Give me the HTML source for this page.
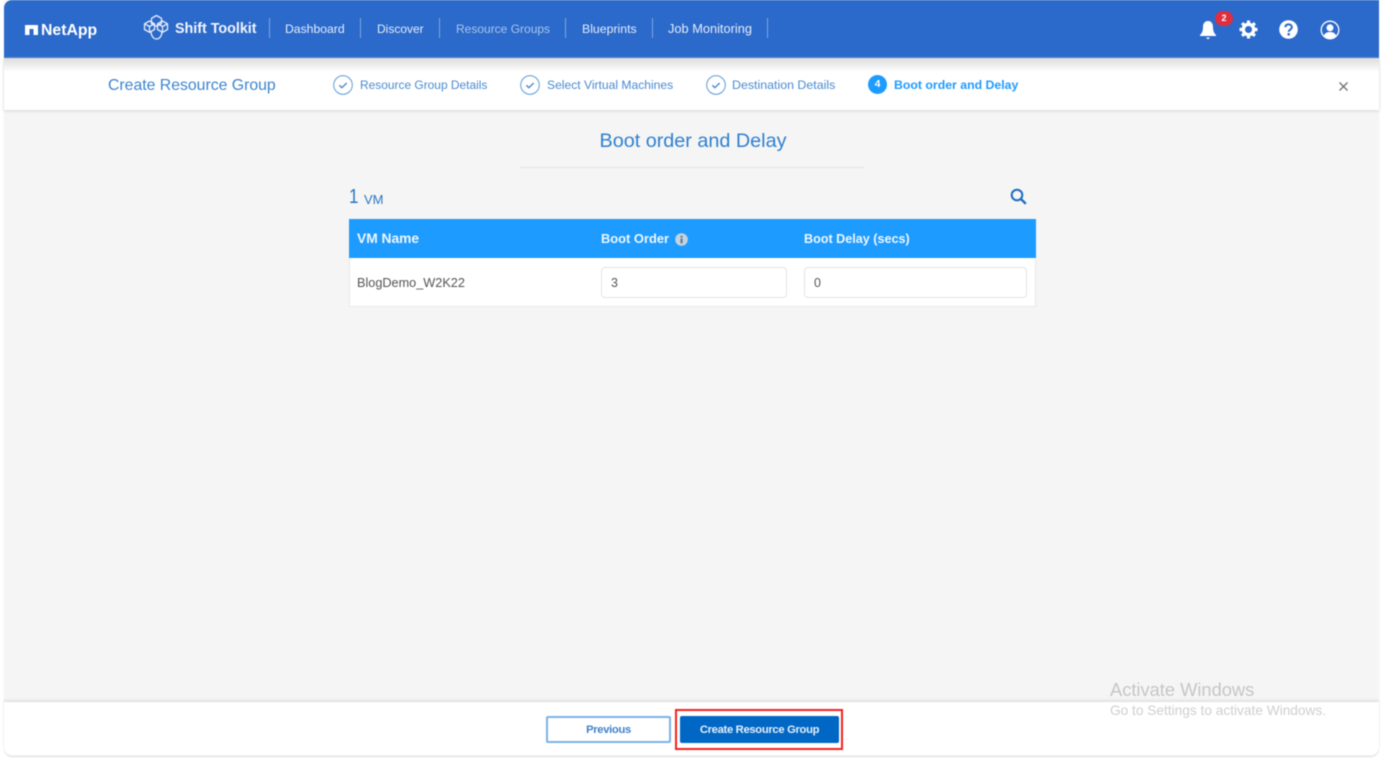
<!DOCTYPE html>
<html lang="en">
<head>
<meta charset="utf-8">
<title>Create Resource Group</title>
<style>
*{box-sizing:border-box;margin:0;padding:0}
html,body{width:1384px;height:760px;overflow:hidden;background:#fff;font-family:"Liberation Sans",sans-serif}
#wrap{position:absolute;left:0;top:0;width:1384px;height:760px;filter:blur(.45px)}
#app{position:absolute;left:4px;top:0;width:1375px;height:756px;background:#f5f5f5;border-radius:0 0 8px 8px;overflow:hidden;box-shadow:0 1px 1px #ddd}
.t{position:absolute;white-space:nowrap;line-height:1}
#hdr{position:absolute;left:4px;top:0;width:1375px;height:58px;background:#2b69ca;border-radius:8px 0 0 0}
#sub{position:absolute;left:4px;top:58px;width:1375px;height:52px;background:#fff;box-shadow:0 1px 3px #d5d5d5}
#shade{position:absolute;left:4px;top:58px;width:1375px;height:14px;background:linear-gradient(#dcdcdc,#fff)}
.sep{position:absolute;top:18px;width:1px;height:20px;background:#7ea5e0}
.nav{color:#e4edfa;top:23px}
.step{color:#4a8ad0;top:79px}
.th{font-weight:bold;color:#eef7ff;top:233px}
.inp{position:absolute;top:267px;height:31px;background:#fff;border:1px solid #e3e3e3;border-radius:4px;font-size:12.5px;color:#555;padding:8px 0 0 9px}
svg{position:absolute;overflow:visible}
</style>
</head>
<body>
<div id="wrap">
<div id="app"></div>
<div id="hdr"></div>
<div id="sub"></div>
<div id="shade"></div>

<!-- NetApp logo -->
<svg style="left:25px;top:25px" width="13" height="10" viewBox="0 0 13 10"><path d="M0 0H13V10H8.500V4H4.500V10H0Z" fill="#fff"/></svg>
<div class="t" style="left:41px;top:23px;font-size:15.800px;font-weight:bold;color:#fff">NetApp</div>

<!-- Shift Toolkit logo -->
<svg style="left:143px;top:14px" width="26" height="27" viewBox="0 0 26 27" fill="none" stroke="#e8effa" stroke-width="1.300" stroke-linejoin="round">
<path d="M13.500 1.500 18.500 4.300V9.500L13.500 12.300 8.500 9.500V4.300Z"/>
<path d="M6.500 7 11.500 9.800V15.500L6.500 18.300 1.500 15.500V9.800Z"/>
<path d="M19.500 7 24.500 9.800V15.500L19.500 18.300 14.500 15.500V9.800Z"/>
<path d="M8 17.500C8 21 10 25 13.500 25S19 21 19 18"/>
<path d="M1.500 9.800 6.500 12.500 11.500 9.800M6.500 12.500V18.300M14.500 9.800 19.500 12.500 24.500 9.800M19.500 12.500V18.300"/>
</svg>
<div class="t" style="left:175px;top:22px;font-size:14.300px;font-weight:bold;color:#f2f6fd">Shift Toolkit</div>

<div class="sep" style="left:269px"></div>
<div class="t nav" style="left:285px;font-size:12.200px">Dashboard</div>
<div class="sep" style="left:360px"></div>
<div class="t nav" style="left:377px;font-size:12px">Discover</div>
<div class="sep" style="left:439px"></div>
<div class="t nav" style="left:456px;color:#a9c5ee;font-size:12px">Resource Groups</div>
<div class="sep" style="left:565px"></div>
<div class="t nav" style="left:582px;font-size:12.300px">Blueprints</div>
<div class="sep" style="left:652px"></div>
<div class="t nav" style="left:668px;font-size:12.800px">Job Monitoring</div>
<div class="sep" style="left:767px"></div>

<!-- Header icons -->
<svg style="left:1199px;top:20px" width="18" height="20" viewBox="0 0 18 20"><path d="M9 1C5.500 1 4 4 4 7c0 4-1 6-3 8v1h16v-1c-2-2-3-4-3-8 0-3-1.500-6-5-6Z" fill="#fff"/><path d="M7 17.500h4L9 19.500Z" fill="#fff"/></svg>
<div class="t" style="left:1215px;top:11px;width:18px;height:15px;border-radius:8px;background:#df2e3f;color:#fff;font-size:9px;font-weight:bold;text-align:center;line-height:15px">2</div>
<svg style="left:1239px;top:20px" width="19" height="19" viewBox="0 0 19 19"><circle cx="9.500" cy="9.500" r="5.200" fill="none" stroke="#fff" stroke-width="3.400"/><path d="M9.500 0.500v3M9.500 15.500v3M0.500 9.500h3M15.500 9.500h3M3.100 3.100l2.200 2.200M13.700 13.700l2.200 2.200M3.100 15.900l2.200-2.200M13.700 5.300l2.200-2.200" stroke="#fff" stroke-width="3.200"/></svg>
<svg style="left:1279px;top:20px" width="19" height="19" viewBox="0 0 19 19"><circle cx="9.500" cy="9.500" r="9.300" fill="#fff"/><path d="M6.300 7.200C6.500 5.300 7.800 4.400 9.600 4.400c1.900 0 3.200 1.100 3.200 2.700 0 2.500-3.100 2.500-3.100 4.800" fill="none" stroke="#2b69ca" stroke-width="2"/><circle cx="9.700" cy="14.300" r="1.300" fill="#2b69ca"/></svg>
<svg style="left:1320px;top:20px" width="20" height="20" viewBox="0 0 20 20"><circle cx="10" cy="10" r="8.800" fill="none" stroke="#fff" stroke-width="1.300"/><circle cx="10" cy="7.800" r="3.500" fill="#fff"/><path d="M3.800 15.500C5 12.800 7.500 12 10 12s5 .8 6.200 3.500C14.500 17.600 12.300 18.500 10 18.500s-4.500-.9-6.200-3Z" fill="#fff"/></svg>

<!-- Stepper -->
<div class="t" style="left:108px;top:78px;font-size:15.800px;color:#3c85cf">Create Resource Group</div>

<svg style="left:333px;top:75px" width="20" height="20" viewBox="0 0 20 20" fill="none" stroke="#4a8ad0"><circle cx="10" cy="10" r="9.300" stroke-width="1.100" stroke="#6ea6dd"/><path d="M6.300 10.300 8.900 12.700 13.700 8" stroke-width="1.400"/></svg>
<div class="t step" style="left:360px;top:80px;font-size:11.950px">Resource Group Details</div>
<svg style="left:520px;top:75px" width="20" height="20" viewBox="0 0 20 20" fill="none" stroke="#4a8ad0"><circle cx="10" cy="10" r="9.300" stroke-width="1.100" stroke="#6ea6dd"/><path d="M6.300 10.300 8.900 12.700 13.700 8" stroke-width="1.400"/></svg>
<div class="t step" style="left:547px;font-size:12.100px">Select Virtual Machines</div>
<svg style="left:706px;top:75px" width="20" height="20" viewBox="0 0 20 20" fill="none" stroke="#4a8ad0"><circle cx="10" cy="10" r="9.300" stroke-width="1.100" stroke="#6ea6dd"/><path d="M6.300 10.300 8.900 12.700 13.700 8" stroke-width="1.400"/></svg>
<div class="t step" style="left:732px;font-size:12.400px">Destination Details</div>
<div class="t" style="left:868px;top:75px;width:19px;height:19px;border-radius:50%;background:#1e9bff;color:#fff;font-size:10.500px;font-weight:bold;text-align:center;line-height:19px">4</div>
<div class="t" style="left:894px;top:79px;font-size:12.300px;font-weight:bold;color:#1e9bff">Boot order and Delay</div>

<svg style="left:1339px;top:82px" width="9" height="9" viewBox="0 0 9 9"><path d="M.5.500l8 8M8.500.500l-8 8" stroke="#707070" stroke-width="1.300"/></svg>

<!-- Page heading -->
<div class="t" style="left:521px;width:344px;top:132px;text-align:center;font-size:19.800px;color:#2f80d0">Boot order and Delay</div>
<div style="position:absolute;left:520px;top:167px;width:344px;height:1px;background:#e2e2e2"></div>

<div class="t" style="left:349px;top:187px;font-size:20px;color:#2a76c4;transform-origin:0 50%;transform:scaleX(.85)">1</div>
<div class="t" style="left:364px;top:193px;font-size:13px;color:#2a76c4">VM</div>
<svg style="left:1010px;top:188px" width="17" height="17" viewBox="0 0 17 17" fill="none" stroke="#1f6cbe" stroke-width="2"><circle cx="7" cy="7" r="5.300"/><path d="M10.800 10.800 15.800 15.800" stroke-width="2.400"/></svg>

<!-- Table -->
<div style="position:absolute;left:349px;top:219px;width:687px;height:39px;background:#1e9bff"></div>
<div style="position:absolute;left:349px;top:258px;width:687px;height:49px;background:#fff;border:1px solid #e8e8e8;border-top:0"></div>
<div class="t th" style="left:357px;font-size:13.800px;top:232px">VM Name</div>
<div class="t th" style="left:601px;font-size:12.900px">Boot Order</div>
<svg style="left:675px;top:233px" width="13" height="13" viewBox="0 0 13 13"><circle cx="6.500" cy="6.500" r="6.300" fill="#c5d3de"/><rect x="5.500" y="5.500" width="2.100" height="4.800" fill="#5f7a90"/><rect x="5.500" y="2.800" width="2.100" height="1.800" fill="#5f7a90"/></svg>
<div class="t th" style="left:804px;font-size:12.600px">Boot Delay (secs)</div>
<div class="t" style="left:357px;top:277px;font-size:12.700px;color:#555">BlogDemo_W2K22</div>
<div class="inp" style="left:601px;width:186px">3</div>
<div class="inp" style="left:804px;width:223px">0</div>

<!-- Footer -->
<div style="position:absolute;left:4px;top:702px;width:1375px;height:53px;background:#fff;border-radius:0 0 8px 8px;box-shadow:0 -2px 2px #e0e0e0"></div>
<div class="t" style="left:546px;top:716px;width:125px;height:27px;background:#fff;border:2px solid #7db2e6;border-radius:2px;color:#3f82c9;font-size:11.200px;font-weight:bold;letter-spacing:-.3px;text-align:center;line-height:25px">Previous</div>
<div style="position:absolute;left:675px;top:709px;width:168px;height:41px;border:2px solid #f5211c"></div>
<div class="t" style="left:680px;top:716px;width:159px;height:27px;background:#0067c5;border-radius:2px;color:#e6f0fa;font-size:11.200px;font-weight:bold;letter-spacing:-.3px;text-align:center;line-height:28px">Create Resource Group</div>

<!-- Watermark -->
<div class="t" style="left:1110px;top:681px;font-size:18.300px;color:#c6c6c6">Activate Windows</div>
<div class="t" style="left:1110px;top:704px;font-size:13.700px;color:#cfcfcf">Go to Settings to activate Windows.</div>
</div>
</body>
</html>
